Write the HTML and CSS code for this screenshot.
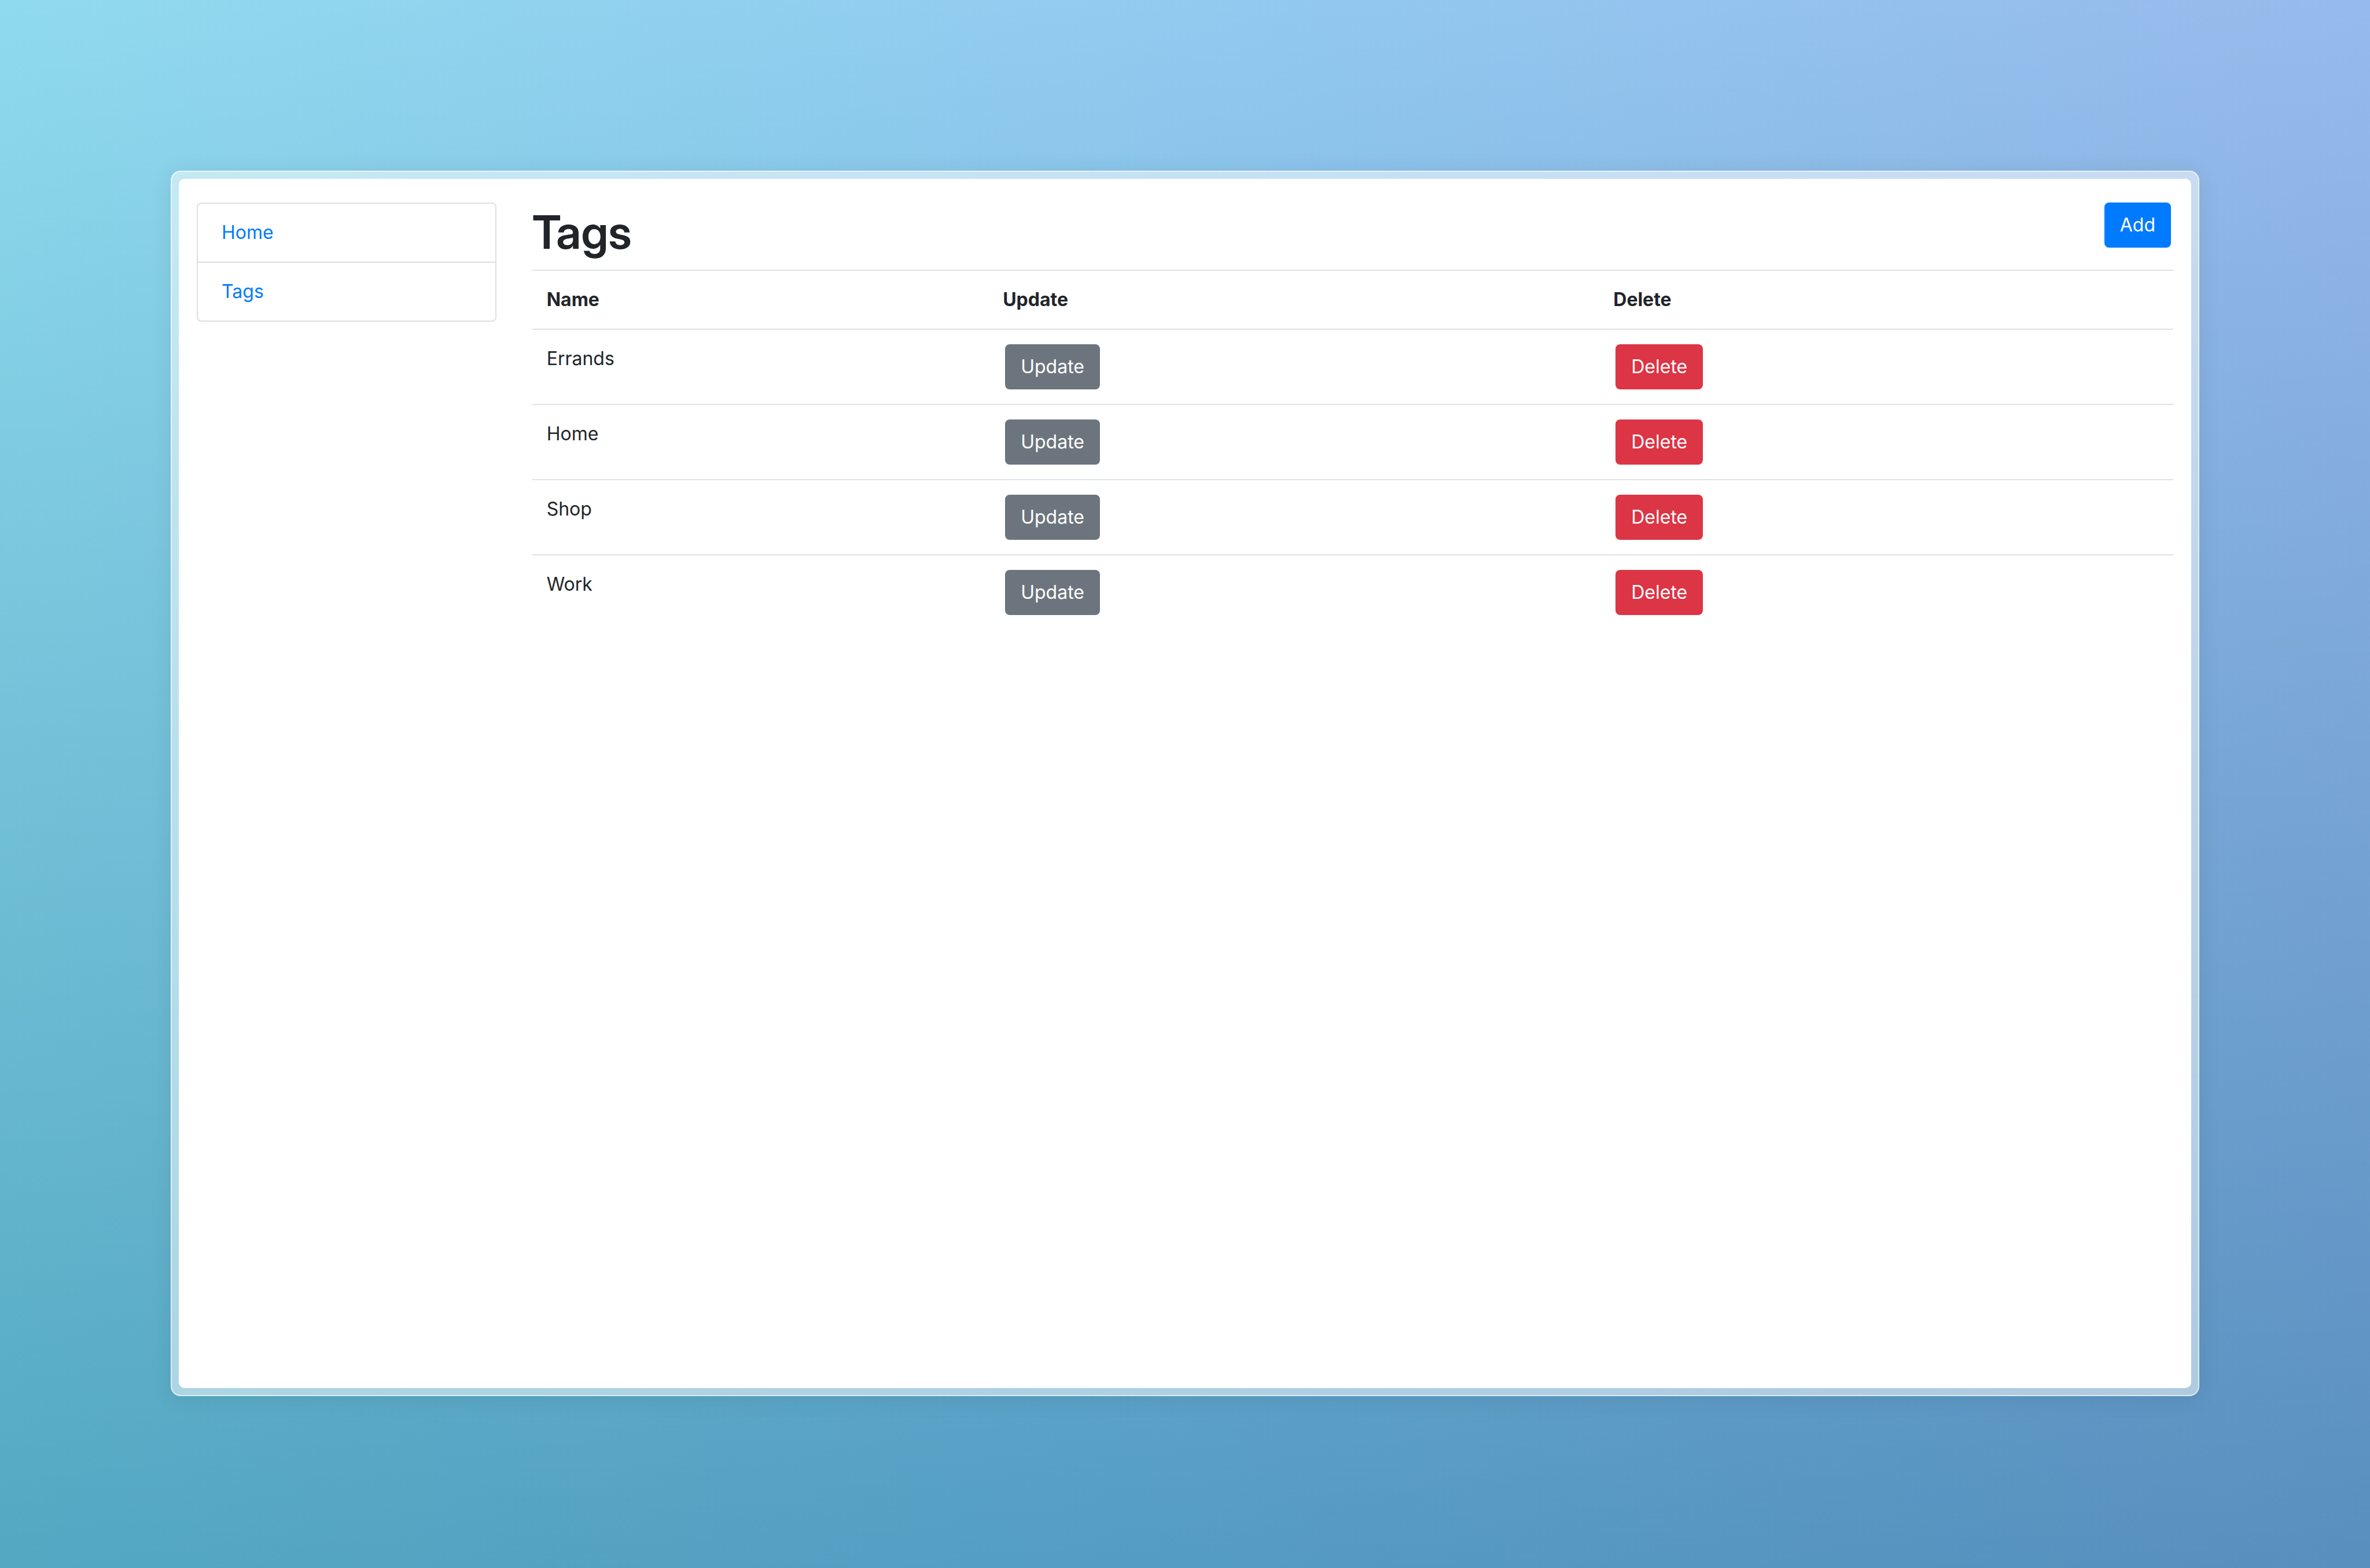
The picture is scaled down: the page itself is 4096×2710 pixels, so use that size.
FILE: index.html
```html
<!DOCTYPE html>
<html lang="en">
<head>
<meta charset="utf-8">
<meta name="viewport" content="width=device-width, initial-scale=1">
<title>Tags</title>
<link rel="stylesheet" href="styles.css">
</head>
<body>
<div class="frame">
  <div class="window">
    <nav class="sidebar" aria-label="Main">
      <ul class="list-group">
        <li class="list-item"><a href="#home">Home</a></li>
        <li class="list-item"><a href="#tags">Tags</a></li>
      </ul>
    </nav>
    <main class="content">
      <header class="page-head">
        <h1 class="title">Tags</h1>
        <button type="button" class="btn btn-primary">Add</button>
      </header>
      <table class="table">
        <colgroup>
          <col class="col-name">
          <col class="col-update">
          <col>
        </colgroup>
        <thead>
          <tr><th scope="col">Name</th><th scope="col">Update</th><th scope="col">Delete</th></tr>
        </thead>
        <tbody>
          <tr>
            <td>Errands</td>
            <td><button type="button" class="btn btn-secondary">Update</button></td>
            <td><button type="button" class="btn btn-danger">Delete</button></td>
          </tr>
          <tr>
            <td>Home</td>
            <td><button type="button" class="btn btn-secondary">Update</button></td>
            <td><button type="button" class="btn btn-danger">Delete</button></td>
          </tr>
          <tr>
            <td>Shop</td>
            <td><button type="button" class="btn btn-secondary">Update</button></td>
            <td><button type="button" class="btn btn-danger">Delete</button></td>
          </tr>
          <tr>
            <td>Work</td>
            <td><button type="button" class="btn btn-secondary">Update</button></td>
            <td><button type="button" class="btn btn-danger">Delete</button></td>
          </tr>
        </tbody>
      </table>
    </main>
  </div>
</div>
</body>
</html>
```
FILE: styles.css
```css
*,
*::before,
*::after {
  box-sizing: border-box;
}

body {
  display: flex;
  min-height: 100vh;
  margin: 0;
  padding: 295px 295px 297px;
  color: #212529;
  font: 400 32px/50px Inter, "Liberation Sans", sans-serif;
  background-image:
    linear-gradient(to bottom, #ffffff, #93c8cf),
    linear-gradient(100deg, #90daee, #92c8f0 50%, #98b6ea);
  background-blend-mode: multiply;
}

/* Translucent bezel around the window */
.frame {
  display: flex;
  flex: 1;
  padding: 12px;
  border: 2px solid rgba(255, 255, 255, 0.6);
  border-radius: 17px;
  background: rgba(255, 255, 255, 0.5);
  box-shadow: 0 4px 40px rgba(0, 0, 0, 0.08);
}

.window {
  display: grid;
  flex: 1;
  grid-template-columns: minmax(0, 1fr) minmax(0, 5fr);
  align-items: start;
  padding: 41px 0;
  border-radius: 10px;
  background: #ffffff;
}

.sidebar,
.content {
  padding: 0 31px;
}

.list-group {
  margin: 0;
  padding: 0;
  border: 2px solid #dfdfdf;
  border-radius: 8px;
  list-style: none;
}

.list-item {
  padding: 25px 41px;
}

.list-item + .list-item {
  border-top: 2px solid #dfdfdf;
}

a {
  color: #007bff;
  text-decoration: none;
}

.page-head {
  display: flex;
  align-items: flex-start;
  justify-content: space-between;
}

.title {
  margin: 0 0 14px;
  font-family: "Inter Display", Inter, "Liberation Sans", sans-serif;
  font-size: 80px;
  font-weight: 600;
  line-height: 102px;
}

.btn {
  display: block;
  margin: 0 4px;
  padding: 12px 25px;
  border: 2px solid transparent;
  border-radius: 8px;
  color: #ffffff;
  font: inherit;
  cursor: pointer;
}

.btn-primary {
  background-color: #007bff;
  border-color: #007bff;
}

.btn-secondary {
  background-color: #6c757d;
  border-color: #6c757d;
}

.btn-danger {
  background-color: #dc3545;
  border-color: #dc3545;
}

.table {
  width: 100%;
  border-spacing: 0;
  table-layout: fixed;
}

.col-name {
  width: 27.8%;
}

.col-update {
  width: 37.2%;
}

.table th,
.table td {
  padding: 25px;
  border-top: 2px solid #dee2e6;
  text-align: left;
  vertical-align: top;
}

.table th {
  font-weight: 700;
}
```
